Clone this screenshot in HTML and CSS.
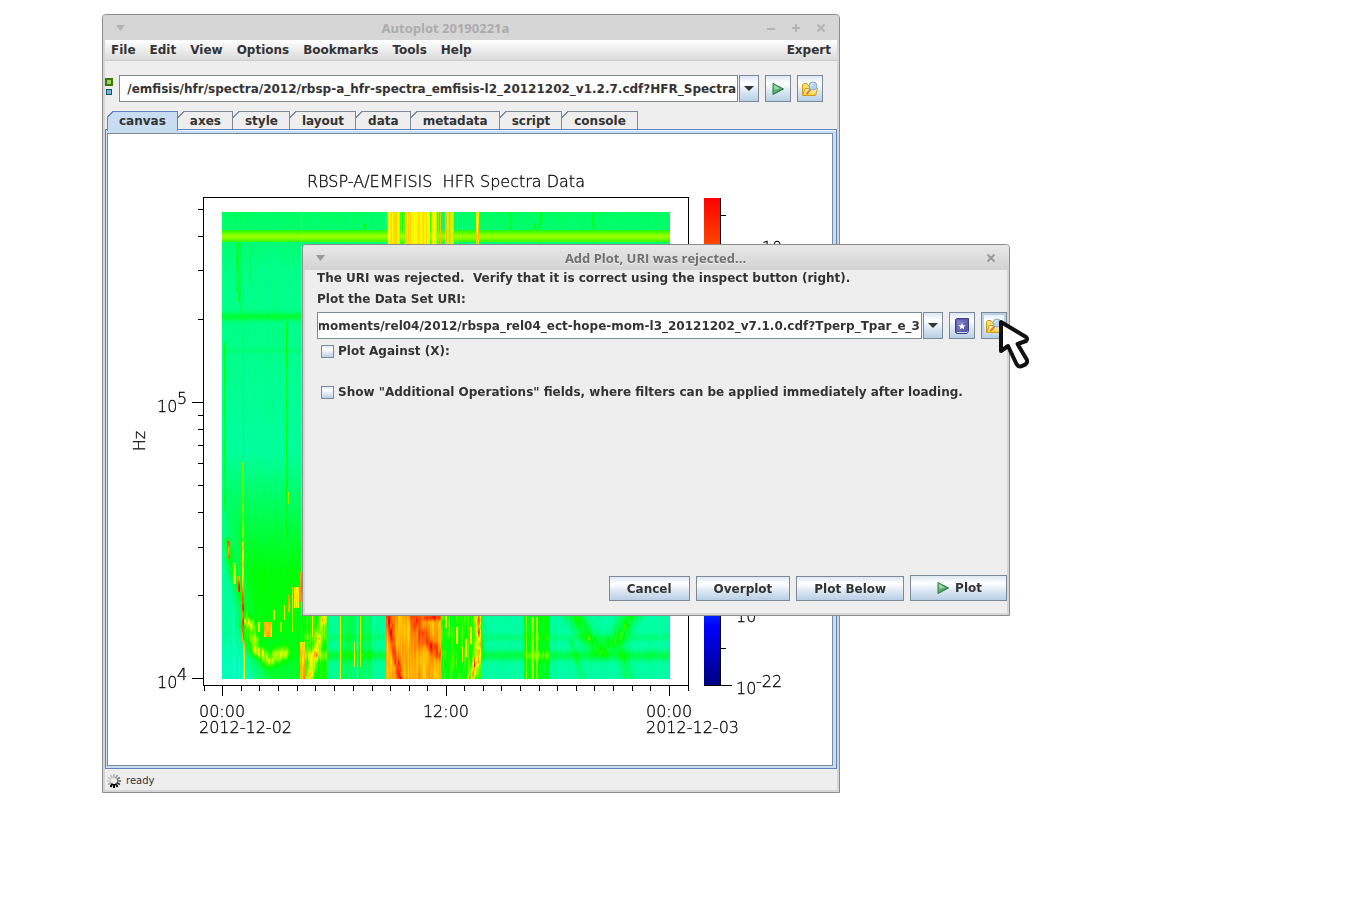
FILE: index.html
```html
<!DOCTYPE html>
<html lang="en">
<head>
    <meta charset="UTF-8">
    <meta name="viewport" content="width=device-width, initial-scale=1.0">
    <title>Autoplot 20190221a</title>
    <link rel="stylesheet" href="styles.css">
</head>
<body>

    <!-- shared icons -->
    <svg class="defs" width="0" height="0" aria-hidden="true">
        <defs>
            <linearGradient id="play-fill" x1="0" y1="0" x2="1" y2="1">
                <stop offset="0" stop-color="#a4d8b0"/>
                <stop offset="0.6" stop-color="#46a35c"/>
                <stop offset="1" stop-color="#2d8a46"/>
            </linearGradient>
            <linearGradient id="folder-fill" x1="0" y1="0" x2="0" y2="1">
                <stop offset="0" stop-color="#fffbd0"/>
                <stop offset="1" stop-color="#f2cc3c"/>
            </linearGradient>
            <linearGradient id="book-fill" x1="0" y1="0" x2="1" y2="1">
                <stop offset="0" stop-color="#8a8ccc"/>
                <stop offset="1" stop-color="#4c4e9e"/>
            </linearGradient>
            <symbol id="icon-play" viewBox="0 0 16 16">
                <path d="M3 2.5L13.5 8L3 13.5Z" fill="url(#play-fill)" stroke="#257a3c"/>
                <path d="M4.5 4.5L10.5 7.7L4.5 8.5Z" fill="#c4e8cb" opacity="0.6"/>
            </symbol>
            <symbol id="icon-folder" viewBox="0 0 16 16">
                <path d="M.5 14V3.5L1.5 2.500H5L6.500 4.500H12.500V7" fill="#f7de72" stroke="#cf9c16"/>
                <path d="M.7 14.500L3 7.500H15.500L13.500 14.500Z" fill="url(#folder-fill)" stroke="#cf9c16"/>
                <path d="M8.500 8.500L4.500 13" stroke="#e07a34" stroke-width="2"/>
                <circle cx="11" cy="5" r="4" fill="#b6d2ee" stroke="#8fa6c4"/>
                <path d="M8.500 5Q9 2.500 11.500 2.500" fill="none" stroke="#eef6ff"/>
            </symbol>
            <symbol id="icon-book" viewBox="0 0 16 16">
                <path d="M1.500 1.500L3 .5H14.500V13.500L13 15.500H2.500L1.500 14.500Z" fill="#5d5fae" stroke="#3d3f86"/>
                <path d="M3 2.500H12.500V13H3Z" fill="url(#book-fill)"/>
                <path d="M3 14.500H13L14 13.500" fill="none" stroke="#dadcf4"/>
                <path d="M8 4.500L9 7.200H11.700L9.600 8.900L10.400 11.600L8 10L5.600 11.600L6.400 8.900L4.300 7.200H7Z" fill="#fff"/>
            </symbol>
            <symbol id="icon-down" viewBox="0 0 10 6">
                <path d="M0 0H10L5 5Z" fill="#333"/>
            </symbol>
        </defs>
    </svg>

    <main class="desktop">

        <section class="window main-window">
            <header class="titlebar inactive">
                <button class="title-button" type="button" aria-label="Window menu"><svg width="10" height="10"><path d="M1 2H10L5.500 8Z" fill="currentColor"/></svg></button>
                <h1 class="title">Autoplot 20190221a</h1>
                <button class="title-button" type="button" aria-label="Minimize"><svg width="10" height="10"><path d="M1 6H9" stroke="currentColor" stroke-width="2"/></svg></button>
                <button class="title-button" type="button" aria-label="Maximize"><svg width="10" height="10"><path d="M1 5H9M5 1V9" stroke="currentColor" stroke-width="2"/></svg></button>
                <button class="title-button" type="button" aria-label="Close"><svg width="10" height="10"><path d="M1.500 1.500L8.500 8.500M8.500 1.500L1.500 8.500" stroke="currentColor" stroke-width="2"/></svg></button>
            </header>

            <nav class="menubar">
                <button type="button">File</button>
                <button type="button">Edit</button>
                <button type="button">View</button>
                <button type="button">Options</button>
                <button type="button">Bookmarks</button>
                <button type="button">Tools</button>
                <button type="button">Help</button>
                <button type="button" class="expert">Expert</button>
            </nav>

            <div class="toolbar">
                <svg class="source-icon" width="8" height="20">
                    <rect x="1" y="4" width="6" height="6" fill="#9ad264" stroke="#3b7a06" stroke-width="2"/>
                    <rect x="1.500" y="14.500" width="5" height="5" fill="#7ab4d4" stroke="#17506e"/>
                </svg>
                <div class="combo">
                    <input class="uri" type="text" aria-label="Data set URI" value="/emfisis/hfr/spectra/2012/rbsp-a_hfr-spectra_emfisis-l2_20121202_v1.2.7.cdf?HFR_Spectra">
                    <button class="metal drop" type="button" aria-label="Recent URIs"><svg width="10" height="6"><use href="#icon-down"/></svg></button>
                </div>
                <button class="metal tool" type="button" aria-label="Plot"><svg width="16" height="16"><use href="#icon-play"/></svg></button>
                <button class="metal tool" type="button" aria-label="Inspect"><svg width="16" height="16"><use href="#icon-folder"/></svg></button>
            </div>

            <div class="tabs" role="tablist">
                <button class="tab selected" type="button" role="tab" aria-selected="true">canvas</button>
                <button class="tab" type="button" role="tab">axes</button>
                <button class="tab" type="button" role="tab">style</button>
                <button class="tab" type="button" role="tab">layout</button>
                <button class="tab" type="button" role="tab">data</button>
                <button class="tab" type="button" role="tab">metadata</button>
                <button class="tab" type="button" role="tab">script</button>
                <button class="tab" type="button" role="tab">console</button>
            </div>

            <div class="tab-pane">
                <div class="plot">
                    <canvas id="spectrogram" width="448" height="467"></canvas>
                    <svg class="axes" width="724" height="631">
                        <defs>
                            <linearGradient id="colorbar" x1="0" y1="0" x2="0" y2="1">
                                <stop offset="0" stop-color="#f00"/>
                                <stop offset="0.1" stop-color="#ff4800"/>
                                <stop offset="0.32" stop-color="#ff0"/>
                                <stop offset="0.5" stop-color="#0f0"/>
                                <stop offset="0.7" stop-color="#0ff"/>
                                <stop offset="0.88" stop-color="#00f"/>
                                <stop offset="1" stop-color="#000080"/>
                            </linearGradient>
                        </defs>

                        <text x="338" y="53" text-anchor="middle" xml:space="preserve">RBSP-A/EMFISIS  HFR Spectra Data</text>
                        <rect class="line" x="95.500" y="63.500" width="485" height="488"/>

                        <!-- frequency axis, log -->
                        <path class="line" d="M84 268.500h11M84 544.500h11"/>
                        <path class="line" d="M90 75.500h5M90 102.500h5M90 136.500h5M90 185.500h5M90 281.500h5M90 295.500h5M90 311.500h5M90 329.500h5M90 351.500h5M90 378.500h5M90 413.500h5M90 461.500h5"/>
                        <text x="49" y="278">10</text>
                        <text x="69" y="270">5</text>
                        <text x="49" y="554">10</text>
                        <text x="69" y="546">4</text>
                        <text x="37" y="307" text-anchor="middle" transform="rotate(-90 37 307)">Hz</text>

                        <!-- time axis, one tick an hour -->
                        <path class="line" d="M114.500 552v10M338.500 552v10M561.500 552v10"/>
                        <path class="line" d="M96.500 552v5M133.500 552v5M151.500 552v5M170.500 552v5M189.500 552v5M207.500 552v5M226.500 552v5M245.500 552v5M264.500 552v5M282.500 552v5M301.500 552v5M319.500 552v5M356.500 552v5M375.500 552v5M393.500 552v5M412.500 552v5M431.500 552v5M449.500 552v5M468.500 552v5M486.500 552v5M505.500 552v5M524.500 552v5M542.500 552v5M580.500 552v5"/>
                        <text x="91" y="583">00:00</text>
                        <text x="91" y="599">2012-12-02</text>
                        <text x="338" y="583" text-anchor="middle">12:00</text>
                        <text x="538" y="583">00:00</text>
                        <text x="538" y="599">2012-12-03</text>

                        <!-- colour bar -->
                        <rect x="596" y="64" width="16" height="487" fill="url(#colorbar)"/>
                        <path class="line" d="M612.500 64V551M596 551.500h28M613 514.500h5M613 81.500h5M613 479.500h11M613 117.500h11"/>
                        <text x="628" y="127">10</text>
                        <text x="648" y="119">-10</text>
                        <text x="628" y="488">10</text>
                        <text x="628" y="560">10</text>
                        <text x="648" y="553">-22</text>
                    </svg>
                </div>
            </div>

            <footer class="statusbar">
                <svg width="14" height="14" viewBox="-7 -7 14 14" stroke-width="1.500">
                    <path d="M0 3V7" stroke="#000" stroke-width="2"/>
                    <path d="M-1.500 2.600L-3.500 6" stroke="#000" stroke-width="2"/>
                    <path d="M1.500 2.600L3.500 6" stroke="#111" stroke-width="2"/>
                    <path d="M2.600 1.500L6 3.500" stroke="#333"/>
                    <path d="M3 0H7" stroke="#555"/>
                    <path d="M2.600 -1.500L6 -3.500" stroke="#777"/>
                    <path d="M1.500 -2.600L3.500 -6" stroke="#999"/>
                    <path d="M0 -3V-7" stroke="#aaa"/>
                    <path d="M-1.500 -2.600L-3.500 -6" stroke="#bbb"/>
                    <path d="M-2.600 -1.500L-6 -3.500" stroke="#ccc"/>
                    <path d="M-3 0H-7" stroke="#ccc"/>
                    <path d="M-2.600 1.500L-6 3.500" stroke="#aaa"/>
                </svg>
                <span>ready</span>
            </footer>
        </section>

        <section class="window dialog" role="dialog" aria-labelledby="dialog-title">
            <header class="titlebar">
                <button class="title-button" type="button" aria-label="Window menu"><svg width="10" height="10"><path d="M1 2H10L5.500 8Z" fill="currentColor"/></svg></button>
                <h2 class="title" id="dialog-title">Add Plot, URI was rejected...</h2>
                <button class="title-button" type="button" aria-label="Close"><svg width="10" height="10"><path d="M1.500 1.500L8.500 8.500M8.500 1.500L1.500 8.500" stroke="currentColor" stroke-width="2"/></svg></button>
            </header>
            <form class="dialog-body">
                <p class="message">The URI was rejected.&nbsp; Verify that it is correct using the inspect button (right).</p>
                <label class="uri-label" for="dialog-uri">Plot the Data Set URI:</label>
                <div class="uri-row">
                    <div class="combo">
                        <input class="uri" id="dialog-uri" type="text" value="/moments/rel04/2012/rbspa_rel04_ect-hope-mom-l3_20121202_v7.1.0.cdf?Tperp_Tpar_e_3">
                        <button class="metal drop" type="button" aria-label="Recent URIs"><svg width="10" height="6"><use href="#icon-down"/></svg></button>
                    </div>
                    <button class="metal tool" type="button" aria-label="Bookmarks"><svg width="16" height="16"><use href="#icon-book"/></svg></button>
                    <button class="metal tool hover" type="button" aria-label="Inspect"><svg width="16" height="16"><use href="#icon-folder"/></svg></button>
                </div>
                <label class="check"><input type="checkbox"> Plot Against (X):</label>
                <label class="check operations"><input type="checkbox"> Show "Additional Operations" fields, where filters can be applied immediately after loading.</label>
                <div class="buttons">
                    <button class="metal" type="button">Cancel</button>
                    <button class="metal" type="button">Overplot</button>
                    <button class="metal" type="button">Plot Below</button>
                    <button class="metal plot-button" type="button"><svg width="16" height="16"><use href="#icon-play"/></svg>Plot</button>
                </div>
            </form>
        </section>

        <svg class="pointer" width="34" height="52" aria-hidden="true">
            <path d="M4 3L4 32L11 27L19.500 45Q22 49 26 46.500Q31 45 30 41L20.500 25L29 22Q31 20 29 18Z" fill="#fff" stroke="#111" stroke-width="4" stroke-linejoin="round"/>
        </svg>
    </main>

    <script src="script.js"></script>
</body>
</html>
```
FILE: styles.css
```css
body {
    margin: 0;
    background-color: #fff;
    color: #333;
    font-family: "DejaVu Sans", Verdana, sans-serif;
    font-size: 12px;
    font-weight: bold;
    line-height: 16px;
}

button, input {
    font: inherit;
    color: inherit;
    border-radius: 0;
    margin: 0;
}

svg {
    display: block;
    flex: none;
}

.defs {
    position: absolute;
}

.desktop {
    position: relative;
    min-height: 100vh;
}

/* windows */

.window {
    position: absolute;
    box-sizing: border-box;
    border: 1px solid #8c8c8c;
    border-radius: 4px 4px 0 0;
    background-color: #d6d6d6;
    padding: 0 2px 2px;
}

.main-window {
    left: 102px;
    top: 14px;
}

.dialog {
    left: 302px;
    top: 244px;
    width: 708px;
}

.titlebar {
    display: flex;
    align-items: center;
    gap: 15px;
    height: 25px;
    box-sizing: border-box;
    margin: 0 -2px;
    padding: 1px 13px 0 12px;
    border-radius: 3px 3px 0 0;
    color: #707070;
    font-family: "Open Sans", "Noto Sans", sans-serif;
    background: linear-gradient(#e8e8e8, #d3d3d3);
}

.titlebar.inactive {
    color: #acacac;
    background: #d6d6d6;
}

.title {
    flex: 1;
    margin: 0;
    text-align: center;
    font-size: 13px;
    line-height: 20px;
    font-weight: bold;
    text-shadow: 0 1px #eee;
}

.inactive .title {
    text-shadow: none;
}

.title-button {
    border: 0;
    padding: 0;
    background: none;
    color: #999;
}

.inactive .title-button {
    color: #b4b4b4;
}

/* main window */

.menubar {
    display: flex;
    gap: 14px;
    height: 20px;
    padding: 0 6px;
    border-bottom: 1px solid #ccc;
    background: linear-gradient(#fff, #dadada);
}

.menubar button {
    border: 0;
    padding: 0;
    background: none;
}

.menubar .expert {
    margin-left: auto;
}

.toolbar {
    display: flex;
    align-items: center;
    gap: 6px;
    padding: 14px 14px 9px 0;
    background-color: #eee;
}

.source-icon {
    align-self: flex-start;
}

.combo {
    display: flex;
    gap: 1px;
    flex: 1;
    min-width: 0;
}

.uri {
    flex: 1;
    min-width: 0;
    height: 27px;
    box-sizing: border-box;
    padding: 0 1px;
    border: 1px solid #7a8a99;
    background-color: #fff;
    text-align: right;
    outline: 0;
}

.metal {
    display: flex;
    align-items: center;
    justify-content: center;
    box-sizing: border-box;
    border: 1px solid #7a8a99;
    background: linear-gradient(#dde8f3, #fff 30%, #dde8f3 60%, #b8cfe5);
}

.drop {
    width: 20px;
    height: 27px;
    padding: 0;
}

.tool {
    width: 26px;
    height: 27px;
    padding: 0;
}

.tool.hover {
    box-shadow: inset 0 0 0 2px #b8cfe5;
}

.tabs {
    display: flex;
    padding: 0 2px;
    background-color: #eee;
}

.tab {
    height: 18px;
    padding: 1px 12px 0;
    border: 0;
    background:
        linear-gradient(135deg, #eee 0 4px, #7a8a99 4px 5px, transparent 5px) 0 0 / 7px 7px no-repeat,
        linear-gradient(#7a8a99, #7a8a99) 6px 0 / 100% 1px no-repeat,
        linear-gradient(#7a8a99, #7a8a99) 100% 0 / 1px 100% no-repeat,
        #eee;
}

.tab.selected {
    position: relative;
    height: 20px;
    margin-bottom: -2px;
    padding-bottom: 2px;
    background:
        linear-gradient(135deg, #eee 0 4px, #6382bf 4px 5px, transparent 5px) 0 0 / 7px 7px no-repeat,
        linear-gradient(#6382bf, #6382bf) 6px 0 / 100% 1px no-repeat,
        linear-gradient(#6382bf, #6382bf) 100% 0 / 1px 100% no-repeat,
        linear-gradient(#6382bf, #6382bf) 0 6px / 1px 100% no-repeat,
        #c8ddf2;
}

.tab-pane {
    padding: 3px 3px 2px 1px;
    border: 1px solid #6382bf;
    background-color: #c8ddf2;
    box-shadow: inset 0 1px #fff;
}

.plot {
    display: grid;
    border: 1px solid #7a8a99;
    background-color: #fff;
}

#spectrogram, .axes {
    grid-area: 1 / 1;
}

#spectrogram {
    margin: 78px 0 0 114px;
}

.axes text {
    fill: #000;
    stroke: #000;
    stroke-width: 0.3;
    font-size: 16px;
    font-family: "DejaVu Sans Light", "DejaVu Sans", sans-serif;
    font-weight: 200;
}

.axes .line {
    fill: none;
    stroke: #000;
}

.statusbar {
    display: flex;
    align-items: center;
    gap: 5px;
    padding: 4px 2px 1px;
    background-color: #eee;
    font-size: 10px;
    font-weight: normal;
}

/* dialog */

.dialog-body {
    display: flex;
    flex-direction: column;
    align-items: stretch;
    min-height: 343px;
    box-sizing: border-box;
    padding: 0 0 12px 12px;
    background-color: #eee;
}

.message {
    margin: 0 0 5px;
}

.uri-row {
    display: flex;
    gap: 6px;
    margin: 5px 0 4px;
}

.check {
    display: flex;
    align-items: center;
    gap: 4px;
    padding-left: 4px;
    white-space: nowrap;
}

.check input {
    appearance: none;
    flex: none;
    width: 13px;
    height: 13px;
    border: 1px solid #7a8a99;
    background: linear-gradient(#dde8f3, #fff 30%, #b8cfe5);
}

.operations {
    margin-top: 25px;
}

.buttons {
    display: flex;
    justify-content: flex-end;
    align-items: flex-end;
    gap: 6px;
    margin-top: auto;
}

.buttons .metal {
    height: 25px;
    padding: 0 17px;
}

.buttons .plot-button {
    gap: 4px;
    height: 26px;
    padding: 0 24px;
}

.pointer {
    position: absolute;
    left: 997px;
    top: 319px;
}
```
FILE: script.js
```js
// show the end of long URIs
document.querySelectorAll('.uri').forEach((input) => {
    input.scrollLeft = input.scrollWidth;
});

const canvas = document.getElementById('spectrogram');
const ctx = canvas.getContext('2d');
const W = canvas.width;
const H = canvas.height;

// deterministic noise, 0..1
function noise(a, b) {
    const n = Math.sin(a * 127.1 + b * 311.7) * 43758.5453;
    return n - Math.floor(n);
}

// noise smoothed along y, one value for each column
function streak(x, y, step) {
    const i = Math.floor(y / step);
    const f = y / step - i;
    return noise(x, i) * (1 - f) + noise(x, i + 1) * f;
}

function bump(d, width) {
    return Math.exp(-(d * d) / (width * width));
}

function clamp(v) {
    return Math.max(0, Math.min(1, v));
}

// level to colour: 0 cyan-green, 1 green, 2 yellow, 3 red
function color(v) {
    if (v < 1) return [0, 255, Math.round(185 * (1 - Math.max(0, v)))];
    if (v < 2) return [Math.round(255 * (v - 1)), 255, 0];
    return [255, Math.round(255 * (3 - Math.min(3, v))), 0];
}

// vertical lines: x, width, level, y from, y to
const lines = [
    [21, 1, 0.9, 120, 250], [20, 2, 1.4, 250, 340], [20, 2, 2.2, 330, 430], [21, 2, 2, 430, 467],
    [79, 1, 1.7, 0, 467], [64, 1, 0.9, 110, 330], [2, 1, 0.8, 130, 300],
    [16, 1, 0.7, 20, 90], [14, 1, 0.6, 0, 80], [18, 1, 0.6, 20, 100], [28, 1, 0.5, 20, 70],
    [66, 1, 1.7, 280, 292],
    [3, 1, 2, 330, 345], [6, 2, 2.2, 329, 346], [11, 3, 1.6, 351, 372], [15, 3, 2.2, 364, 380],
    [11, 1, 2, 395, 467], [13, 1, 1.8, 430, 467], [17, 1, 1.9, 445, 467], [25, 1, 1.9, 393, 402],
    [36, 2, 2, 410, 420], [42, 8, 2.3, 410, 425], [51, 2, 1.9, 398, 408], [58, 2, 1.6, 410, 420],
    [66, 2, 2.3, 383, 400], [72, 5, 2.1, 375, 396], [70, 1, 1.8, 375, 420], [62, 1, 2, 393, 408],
    [78, 2, 2.5, 360, 390], [78, 5, 2.2, 430, 467], [85, 1, 1.8, 404, 440], [90, 1, 2, 400, 425],
    [118, 1, 2, 395, 467], [132, 1, 1.9, 430, 455], [135, 1, 2, 404, 467], [138, 1, 1.8, 404, 455],
    [223, 2, 2, 404, 416], [227, 1, 2, 404, 425], [234, 2, 2, 415, 432],
    [252, 1, 2, 445, 455], [240, 1, 2, 435, 450], [243, 2, 2, 427, 445], [248, 2, 2, 415, 432],
    [309, 3, 1.6, 405, 467], [304, 1, 1.5, 400, 467], [314, 2, 1.5, 405, 467],
    [123, 1, 0.9, 0, 40], [141, 1, 1.1, 0, 12], [142, 2, 1.1, 12, 30],
    [159, 1, 1.4, 0, 40], [161, 1, 1.2, 0, 40], [163, 1, 1.7, 0, 40],
    [235, 1, 2, 0, 40], [254, 3, 2.1, 0, 40], [288, 1, 0.8, 0, 40],
    [311, 1, 1.1, 0, 12], [312, 2, 1.1, 12, 30], [318, 1, 0.8, 0, 40],
    [361, 1, 0.7, 0, 40], [370, 2, 0.7, 0, 40]
];

// distance from x,y to a polyline of points
function distance(x, y, points) {
    let best = 999;
    for (let i = 0; i < points.length - 1; i++) {
        const [ax, ay] = points[i];
        const [bx, by] = points[i + 1];
        const t = clamp(((x - ax) * (bx - ax) + (y - ay) * (by - ay)) / ((bx - ax) ** 2 + (by - ay) ** 2));
        best = Math.min(best, Math.hypot(x - ax - t * (bx - ax), y - ay - t * (by - ay)));
    }
    return best;
}

// curves: points, width, level added
const curves = [
    [[[4, 330], [10, 360], [17, 378], [25, 412]], 4, 0.5],
    [[[25, 412], [32, 437], [46, 448], [62, 440]], 6, 1.2],
    [[[101, 404], [93, 440], [86, 467]], 4, 1],
    [[[166, 400], [170, 430], [178, 467]], 3, 0.6],
    [[[190, 400], [202, 428], [219, 442]], 6, 0.4],
    [[[202, 405], [219, 405]], 3, 0.5],
    [[[256, 400], [257, 440], [248, 467]], 4, 1.1],
    [[[349, 400], [366, 425], [378, 436], [395, 428], [410, 400]], 8, 0.8],
    [[[349, 430], [360, 467]], 3, 0.35],
    [[[400, 440], [406, 467]], 5, 0.35]
];

function level(x, y) {
    let v;
    const n = streak(x, y, 40);

    // quiet background, greener towards low frequencies
    v = 0.22 + 0.1 * n + 0.2 * clamp((60 - y) / 60) - 0.1 * clamp((y - 120) / 100);
    if (x < 81) {
        v += 0.78 * clamp((y - 240) / 120) * clamp((x + 14 - Math.max(0, y - 280) * 0.2) / 25);
        v -= 0.2 * clamp((y - 420) / 40);
    }
    if (y > 390 && x >= 81) {
        if (x < 105) v = 0.85 + 0.5 * n;
        else if (x < 119) v = 0.2 + 0.15 * n;
        else if (x < 150) v = 0.35 + 0.45 * n;
        else if (x < 164) v = 0.15 + 0.25 * n;
        else if (x < 219) v = 2.08 + 0.22 * n + 0.25 * streak(x >> 2, y, 14);
        else if (x < 259) v = 0.75 + 0.65 * streak(x, y, 15);
        else if (x < 302) v = 0.15 + 0.15 * n;
        else if (x < 327) v = 0.75 + 0.4 * n;
        else v = 0.15 + 0.16 * n;
        if (x < 164 || x >= 259) {
            v += 0.5 * bump(y - 443, 5) + 0.2 * bump(y - 425, 4) - 0.1;
        }
    }

    // busy columns near noon
    if (y < 40) {
        if ((x > 164 && x < 177) || (x > 182 && x < 208)) v = 1.98 + 0.2 * noise(x, 3);
        else if (x > 222 && x < 232) v = 1.7 + 0.6 * noise(x, 7);
        else if (x >= 177 && x < 219) v = 0.8 + 1.5 * noise(x, 5);
    }

    for (const [lx, w, lv, y0, y1] of lines) {
        if (x >= lx && x < lx + w && y >= y0 && y < y1) {
            v = Math.max(v, lv + 0.35 * (streak(x, y, 8) - 0.5));
        }
    }

    for (const [points, w, add] of curves) {
        const d = distance(x, y, points);
        if (d < w * 2) v += add * bump(d, w) * (0.4 + streak(x >> 1, y, 6));
    }

    // constant interference lines
    if (y >= 18 && y < 30) v = Math.max(v, 1.15 + 0.45 * bump(y - 24, 4));
    v += 0.45 * bump(y - 104, 4) + 0.1 * bump(y - 138, 3);
    return v;
}

const image = ctx.createImageData(W, H);
for (let y = 0; y < H; y++) {
    for (let x = 0; x < W; x++) {
        const [r, g, b] = color(level(x, y));
        const i = (y * W + x) * 4;
        image.data[i] = r;
        image.data[i + 1] = g;
        image.data[i + 2] = b;
        image.data[i + 3] = 255;
    }
}
ctx.putImageData(image, 0, 0);
```
